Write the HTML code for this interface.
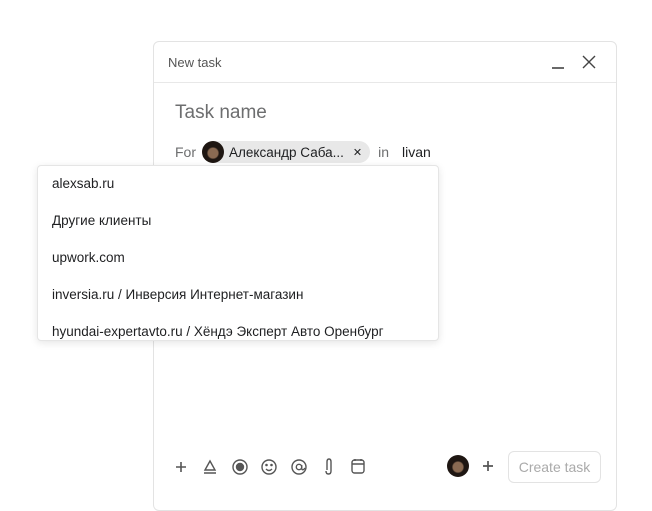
<!DOCTYPE html>
<html><head><meta charset="utf-8"><style>
*{box-sizing:border-box;margin:0;padding:0}
body{width:652px;height:500px;background:#fff;font-family:"Liberation Sans","Noto Sans CJK SC",sans-serif;position:relative;overflow:hidden;color:#1e1f21}
.dlg{position:absolute;left:153px;top:41px;width:464px;height:470px;border:1px solid #e3e3e3;border-radius:6px;background:#fff}
.hdr{height:41px;border-bottom:1px solid #e8e8e8;position:relative}
.hdr span{position:absolute;left:14px;top:13px;font-size:13px;color:#555}
.title{position:absolute;left:21px;top:60px;font-size:19px;color:#6d6e6f}
.for{position:absolute;left:21px;top:99px;font-size:14px;color:#6d6e6f;display:flex;align-items:center}
.chip{display:flex;align-items:center;background:#e8e8e8;border-radius:12px;height:22px;padding-right:8px;margin-left:6px;color:#1e1f21;font-size:13.5px}
.av{width:22px;height:22px;border-radius:50%;background:radial-gradient(circle at 50% 55%,#8a6a52 0 30%,#1e1612 38%);}
.dd{position:absolute;left:37px;top:165px;width:402px;height:176px;background:#fff;border:1px solid #e5e5e5;border-radius:4px;box-shadow:0 2px 8px rgba(0,0,0,.1);overflow:hidden}
.dd div{position:absolute;left:14px;font-size:13.5px;color:#1e1f21}
.btn{position:absolute;left:508px;top:451px;width:93px;height:32px;border:1px solid #e3e3e3;border-radius:6px;font-size:14px;color:#aaa;text-align:center;line-height:30px}
</style></head><body>
<div class="dlg">
 <div class="hdr"><span>New task</span>
  <svg style="position:absolute;left:397px;top:14px" width="14" height="14"><path d="M1 12H13" stroke="#444" stroke-width="1.6"/></svg>
  <svg style="position:absolute;left:428px;top:13px" width="14" height="14"><path d="M1 1L13 13M13 1L1 13" stroke="#444" stroke-width="1.4"/></svg>
 </div>
 <div class="title">Task name</div>
 <div class="for">For<div class="chip"><div class="av"></div><span style="margin-left:5px">Александр Саба...</span><span style="margin-left:9px;font-size:11px">✕</span></div><span style="margin-left:8px">in</span><span style="margin-left:13px;color:#1e1f21">livan</span></div>
</div>
<div class="dd">
 <div style="top:10px">alexsab.ru</div>
 <div style="top:47px">Другие клиенты</div>
 <div style="top:84px">upwork.com</div>
 <div style="top:121px">inversia.ru / Инверсия Интернет-магазин</div>
 <div style="top:158px">hyundai-expertavto.ru / Хёндэ Эксперт Авто Оренбург</div>
</div>
<svg style="position:absolute;left:170px;top:456px" width="200" height="22" fill="none" stroke="#555" stroke-width="1.4">
 <path d="M11 6V16M6 11H16" stroke-width="1.6"/>
 <path d="M35 14L40 5L45 14ZM34 17H46"/>
 <circle cx="70" cy="11" r="7"/><circle cx="70" cy="11" r="3.5" fill="#555"/>
 <circle cx="99" cy="11" r="7"/><path d="M96 13Q99 16 102 13"/><circle cx="96.5" cy="9" r=".6" fill="#555"/><circle cx="101.5" cy="9" r=".6" fill="#555"/>
 <circle cx="129" cy="11" r="7"/><circle cx="129" cy="11" r="2.7"/><path d="M131.7 9V13Q133 15 135 12"/>
 <path d="M157 14V6Q157 3 159 3Q161 3 161 6V15Q161 18 158.5 18Q156 18 156 15"/>
 <rect x="182" y="4" width="12" height="13" rx="2.5"/><path d="M182 8H194M185 3V5M191 3V5"/>
</svg>
<div class="av" style="position:absolute;left:447px;top:455px"></div>
<svg style="position:absolute;left:481px;top:459px" width="14" height="14"><path d="M7 2V12M2 7H12" stroke="#555" stroke-width="1.7"/></svg>
<div class="btn">Create task</div>
</body></html>
